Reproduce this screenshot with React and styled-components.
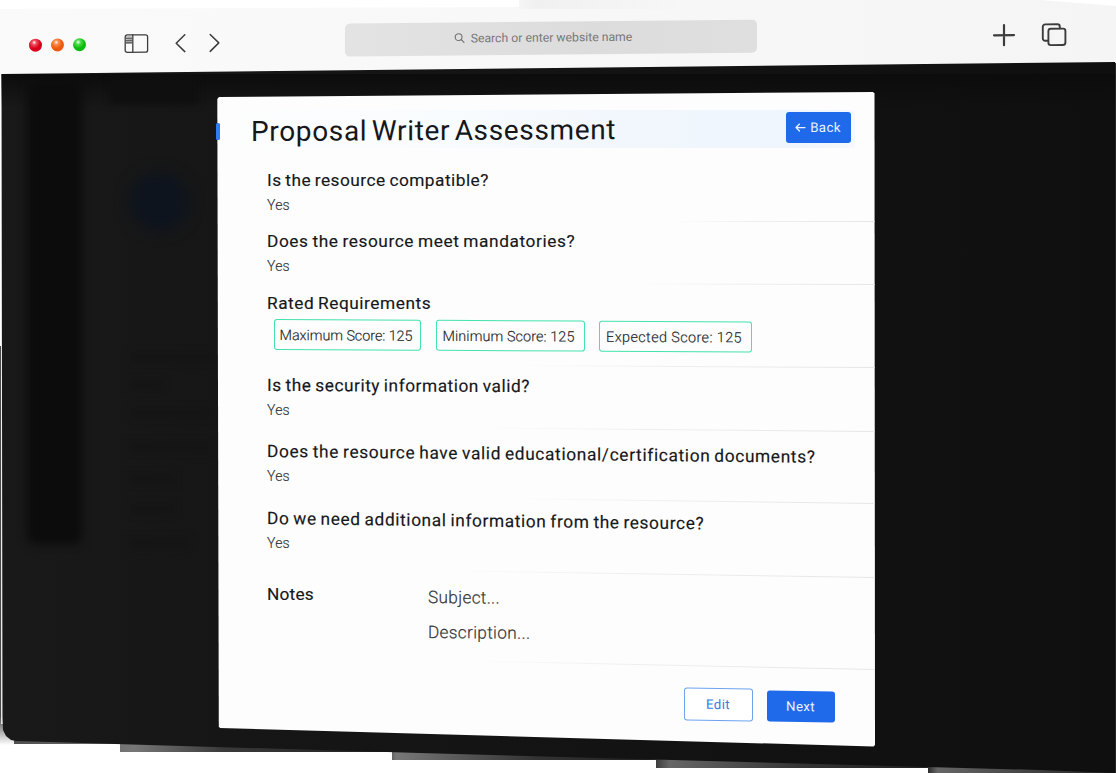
import React from "react";
import styled, { createGlobalStyle } from "styled-components";

const GlobalStyle = createGlobalStyle`
  * { box-sizing: border-box; }
  body {
    margin: 0;
    background: #fff;
    overflow: hidden;
    font-family: Roboto, "Liberation Sans", sans-serif;
  }
`;

const Page = styled.div`
  position: relative;
  width: 1116px;
  height: 773px;
  overflow: hidden;
  display: flex;
  flex-direction: column;
`;

/* Grey steps that peek out under the tilted window */
const WindowShadow = styled.div`
  position: absolute;
  inset: 0;
  background: linear-gradient(90deg, #4a4a4a 0, #777 12%, #3a3a3a 20%, #222 34%, #777 35.5%, #333 48%, #222 58%, #666 60%, #333 72%, #222 83%, #666 84%, #222 100%);
  clip-path: polygon(
    0 346px, 8px 346px, 8px 744px, 120px 744px, 120px 752px, 392px 752px, 392px 760px,
    656px 760px, 656px 768px, 928px 768px, 928px 773px, 1116px 773px, 1116px 56px,
    1114px 56px, 1114px 760px, 400px 740px, 8px 730px, 0 720px
  );
`;

const CornerFade = styled.div`
  position: absolute;
  left: 0;
  top: 715px;
  width: 14px;
  height: 30px;
  background: linear-gradient(#444, #999 45%, #fff);
`;

const LeftEdge = styled.div`
  position: absolute;
  left: 1px;
  top: 74px;
  width: 2px;
  height: 650px;
  background: linear-gradient(#fff, #e4e4e4);
`;

const Chrome = styled.header`
  flex: none;
  height: 75px;
  background:
    linear-gradient(90deg, #0000 46%, #f0f0f0 48%, #f6f6f600 62%) 0 0 / 100% 9px no-repeat,
    linear-gradient(90deg, #fafafa 0, #f8f8f8 45%, #f5f5f5 100%);
  clip-path: polygon(0 9px, 519px 7px, 519px 0, 1040px 0, 1116px 6px, 1116px 63px, 0 75px);
`;

const Toolbar = styled.div`
  display: flex;
  align-items: center;
  height: 90px;
  padding-left: 29px;
  transform: skewY(-0.56deg);
  transform-origin: 0 50%;
`;

const Dots = styled.div`
  display: flex;
  gap: 8.9px;
  width: 95px;
`;

const Dot = styled.span`
  width: 13px;
  height: 13px;
  border-radius: 50%;
  background: radial-gradient(circle at 40% 30%, #fff 0, ${(p) => p.$light} 18%, ${(p) => p.$color} 50%);
`;

const SearchField = styled.div`
  display: flex;
  align-items: center;
  justify-content: center;
  gap: 6px;
  width: 412px;
  height: 33px;
  margin: -4px 235px 0 124px;
  padding: 0 16px 1px 0;
  border-radius: 5px;
  background: linear-gradient(90deg, #e3e3e3, #dcdcdc 60%, #dfdfdf);
  color: #777;
  font-size: 12.2px;
  letter-spacing: 0.02px;
`;

const Icon = styled.svg`
  flex: none;
  fill: none;
  stroke: ${(p) => p.$color || "#3c3c3c"};
  stroke-width: ${(p) => p.$weight || 1.6};
  stroke-linecap: round;
  stroke-linejoin: round;
  margin-left: ${(p) => p.$gap || 0}px;
`;

const Backdrop = styled.main`
  position: relative;
  display: flex;
  flex: none;
  height: 711px;
  margin-top: -13px;
  padding: 30px 0 0 217px;
  background:
    linear-gradient(#0c0c0c, #0c0c0c00) 0 12px / 100% 34px no-repeat,
    linear-gradient(90deg, #191919 0, #161616 20%, #111 78%, #0f0f0f 100%);
  clip-path: polygon(1.5px 12px, 1115px 0, 1115px 711px, 1040px 708px, 420px 691px, 16px 679px, 11px 678px, 6px 674px, 3px 668px, 2.5px 655px);
`;

const DimmedSidebar = styled.div`
  position: absolute;
  left: 27px;
  top: 20px;
  width: 55px;
  height: 462px;
  border-radius: 8px;
  background: #0c0c0c;
  filter: blur(4px);
`;

const DimmedAvatar = styled.div`
  position: absolute;
  left: 129px;
  top: 110px;
  width: 60px;
  height: 60px;
  border-radius: 50%;
  background: #0e141e;
  filter: blur(7px);
`;

const DimmedHeading = styled.div`
  position: absolute;
  left: 110px;
  top: 14px;
  width: 88px;
  height: 28px;
  background: #0f0f0f;
  filter: blur(3px);
`;

const DimmedLine = styled.div`
  position: absolute;
  left: 129px;
  top: ${(p) => p.$top}px;
  width: ${(p) => p.$width}px;
  height: 10px;
  background: #151515;
  filter: blur(3px);
`;

const ActiveTab = styled.span`
  position: absolute;
  left: 215.5px;
  top: 61px;
  width: 4px;
  height: 17px;
  border-radius: 1.5px;
  background: #2f7df6;
`;

const Card = styled.section`
  display: flex;
  flex-direction: column;
  width: 658px;
  height: 655px;
  background: #fdfdfd;
  color: #15171a;
  clip-path: polygon(0.3px 7px, 2px 5px, 656px 0, 657.5px 1.5px, 658px 653px, 656.5px 654.5px, 3px 636px, 1.8px 634.5px);
`;

const CardHeader = styled.div`
  display: flex;
  align-items: center;
  justify-content: space-between;
  height: 38px;
  margin: 18px 20px 12px 0;
  padding: 0 4px 3px 34px;
  background: linear-gradient(90deg, #f9fcff00 0, #f9fcfe 35%, #f2f7fd 62%, #eef5fd 92%, #f6f9fd 100%);
`;

const Title = styled.h1`
  margin: 6px 0 0;
  font-size: 28px;
  font-weight: 400;
  line-height: 36px;
  letter-spacing: 0.65px;
  word-spacing: -3px;
  transform: skewY(-0.3deg);
`;

const Button = styled.button`
  display: flex;
  align-items: center;
  justify-content: center;
  gap: 4px;
  width: ${(p) => p.$width}px;
  height: ${(p) => (p.$outlined ? 33 : 31)}px;
  padding: 0 1px 1px 0;
  border: ${(p) => (p.$outlined ? "1px solid #6ea3ef" : "0")};
  border-radius: 3px;
  background: ${(p) => (p.$outlined ? "#fff" : "#1f6aea")};
  color: ${(p) => (p.$outlined ? "#3a7ae4" : "#eaf2ff")};
  font: 400 13.3px Roboto, "Liberation Sans", sans-serif;
  letter-spacing: 0.35px;
  transform: skewY(${(p) => p.$tilt || 0}deg);
`;

const Section = styled.div`
  display: flex;
  flex-direction: column;
  height: ${(p) => p.$height}px;
  padding: ${(p) => p.$top}px 0 0 50px;
`;

const Question = styled.div`
  align-self: flex-start;
  font-size: 17.3px;
  font-weight: 400;
  line-height: 24px;
  white-space: nowrap;
  letter-spacing: ${(p) => p.$spacing}px;
  word-spacing: -1px;
  -webkit-text-stroke: 0.15px #15171a;
  transform: skewY(${(p) => p.$tilt || 0}deg);
  transform-origin: 0 50%;
`;

const Answer = styled.div`
  margin-top: 1px;
  color: #303234;
  font-size: 14px;
  font-weight: 300;
  line-height: 24px;
  letter-spacing: 0.2px;
  -webkit-text-stroke: 0.15px #303234;
`;

const Divider = styled.hr`
  align-self: flex-end;
  flex: none;
  width: ${(p) => p.$width}px;
  height: 1px;
  margin: auto 0 0;
  border: 0;
  background: linear-gradient(90deg, #f0f0f000, #efeff0 40%, #e4e6e8);
  transform: skewY(${(p) => p.$tilt || 0}deg);
  transform-origin: 100% 50%;
`;

const Chips = styled.div`
  display: flex;
  gap: 14.5px;
  margin: 4px 0 0 7px;
  transform: skewY(0.3deg);
  transform-origin: 0 50%;
`;

const Chip = styled.span`
  display: flex;
  align-items: center;
  justify-content: center;
  width: ${(p) => p.$width}px;
  height: 31px;
  padding: 1px 3px 0 0;
  border: 1.4px solid #43e3ab;
  border-radius: 3px;
  color: #222426;
  font-size: 14.4px;
  font-weight: 300;
  letter-spacing: ${(p) => p.$spacing}px;
  white-space: nowrap;
  -webkit-text-stroke: 0.15px #222426;
`;

const Notes = styled.div`
  display: grid;
  grid-template-columns: 160.5px 1fr;
`;

const NoteFields = styled.div`
  display: flex;
  flex-direction: column;
  gap: 11px;
  padding-top: 3.5px;
`;

const NoteField = styled.div`
  color: #333537;
  font-size: 17.2px;
  font-weight: 300;
  line-height: 24px;
  letter-spacing: 0.33px;
  -webkit-text-stroke: 0.2px #333537;
  transform: skewY(0.5deg);
  transform-origin: 0 50%;
`;

const Footer = styled.div`
  display: flex;
  gap: 14px;
  padding: 17.6px 0 0 467px;
`;

const NextSlot = styled.div`
  padding-top: 3.4px;
`;

const DIMMED_LINES = [
  [290, 85],
  [318, 34],
  [346, 84],
  [380, 80],
  [412, 46],
  [442, 46],
  [476, 60],
];

export default function App() {
  return (
    <Page>
      <GlobalStyle />
      <WindowShadow />
      <CornerFade />
      <LeftEdge />
      <Chrome>
        <Toolbar>
          <Dots>
            <Dot $color="#d8001c" $light="#f0505f" />
            <Dot $color="#ee5a0c" $light="#fb9050" />
            <Dot $color="#0cbc0c" $light="#55e055" />
          </Dots>
          <Icon width="25" height="20" viewBox="0 0 25 20" $weight={1.3}>
            <rect x="1.2" y="1.2" width="22.4" height="17.4" rx="2" />
            <path d="M8.8 1.2v17.4M2.5 4.6h5M2.5 6.8h5M2.5 9h5" />
            <path d="M2.2 2.2h6v8h-6z" fill="#8888" stroke="none" />
          </Icon>
          <Icon width="13" height="20" viewBox="0 0 13 20" $weight={1.5} $gap={24.5}>
            <path d="M10.8 1.6 2.2 10l8.6 8.4" />
          </Icon>
          <Icon width="13" height="20" viewBox="0 0 13 20" $weight={1.5} $gap={21.5}>
            <path d="M2.2 1.6 10.8 10l-8.6 8.4" />
          </Icon>
          <SearchField>
            <Icon width="11" height="11" viewBox="0 0 11 11" $weight={1.1} $color="#707070">
              <circle cx="4.6" cy="4.6" r="3.4" />
              <path d="m7.2 7.2 2.8 2.8" />
            </Icon>
            Search or enter website name
          </SearchField>
          <Icon width="24" height="24" viewBox="0 0 24 24" $weight={2.2}>
            <path d="M12 2v20M2 12h20" />
          </Icon>
          <Icon width="26" height="24" viewBox="0 0 26 24" $weight={1.9} $gap={24.7}>
            <path d="M6.6 18H4.2a2.4 2.4 0 0 1-2.4-2.4V4a2.4 2.4 0 0 1 2.4-2.4h12.2A2.4 2.4 0 0 1 18.8 4v1.6" />
            <rect x="7.4" y="6" width="17" height="16.4" rx="2.4" />
          </Icon>
        </Toolbar>
      </Chrome>
      <Backdrop>
        <DimmedHeading />
        <DimmedSidebar />
        <DimmedAvatar />
        {DIMMED_LINES.map(([top, width]) => (
          <DimmedLine key={top} $top={top} $width={width} />
        ))}
        <Card>
          <CardHeader>
            <Title>Proposal Writer Assessment</Title>
            <Button $width={65} $tilt={-0.2}>
              <Icon width="11" height="11" viewBox="0 0 11 11" $weight={1.3} $color="#eaf2ff">
                <path d="M10 5.5H1M4.5 2 1 5.5 4.5 9" />
              </Icon>
              Back
            </Button>
          </CardHeader>
          <Section $height={62} $top={7.5}>
            <Question $spacing={0.47}>Is the resource compatible?</Question>
            <Answer>Yes</Answer>
            <Divider $width={206} />
          </Section>
          <Section $height={63} $top={7}>
            <Question $spacing={0.58}>Does the resource meet mandatories?</Question>
            <Answer>Yes</Answer>
            <Divider $width={235} $tilt={0.1} />
          </Section>
          <Section $height={83} $top={5.5}>
            <Question $spacing={0.53}>Rated Requirements</Question>
            <Chips>
              <Chip $width={147} $spacing={-0.06}>Maximum Score: 125</Chip>
              <Chip $width={149} $spacing={0.09}>Minimum Score: 125</Chip>
              <Chip $width={153} $spacing={0.4}>Expected Score: 125</Chip>
            </Chips>
            <Divider $width={360} $tilt={0.3} />
          </Section>
          <Section $height={64} $top={5.3}>
            <Question $spacing={0.53} $tilt={0.25}>Is the security information valid?</Question>
            <Answer>Yes</Answer>
            <Divider $width={395} $tilt={0.5} />
          </Section>
          <Section $height={72} $top={7}>
            <Question $spacing={0.65} $tilt={0.6}>
              Does the resource have valid educational/certification documents?
            </Question>
            <Answer>Yes</Answer>
            <Divider $width={360} $tilt={0.75} />
          </Section>
          <Section $height={74} $top={2}>
            <Question $spacing={0.61} $tilt={0.7}>
              Do we need additional information from the resource?
            </Question>
            <Answer>Yes</Answer>
            <Divider $width={425} $tilt={0.9} />
          </Section>
          <Section $height={92} $top={3.8}>
            <Notes>
              <Question $spacing={0.2}>Notes</Question>
              <NoteFields>
                <NoteField>Subject...</NoteField>
                <NoteField>Description...</NoteField>
              </NoteFields>
            </Notes>
            <Divider $width={410} $tilt={1.2} />
          </Section>
          <Footer>
            <Button $width={69} $outlined $tilt={0.9}>Edit</Button>
            <NextSlot>
              <Button $width={68} $tilt={0.9}>Next</Button>
            </NextSlot>
          </Footer>
        </Card>
        <ActiveTab />
      </Backdrop>
    </Page>
  );
}
